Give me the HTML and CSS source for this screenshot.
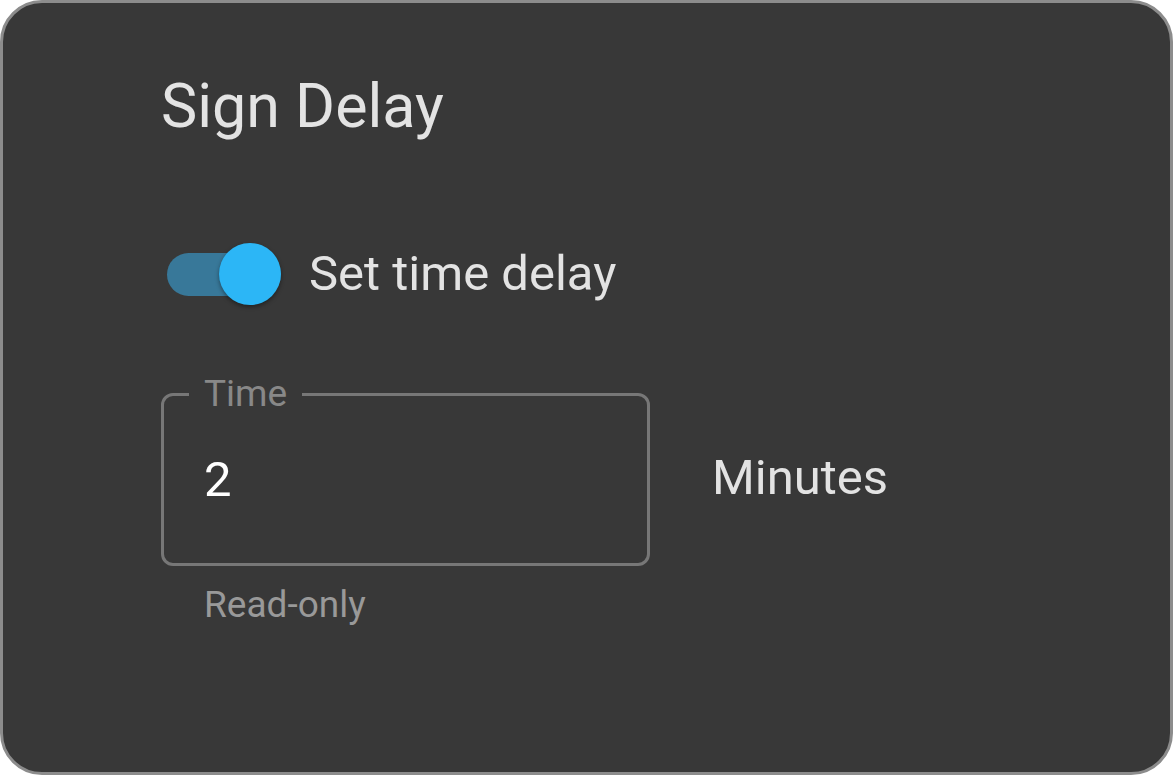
FILE: index.html
```html
<!DOCTYPE html>
<html lang="en">
<head>
<meta charset="utf-8">
<title>Sign Delay</title>
<link rel="stylesheet" href="styles.css">
</head>
<body>
<main class="card">
  <h1 class="title">Sign Delay</h1>
  <label class="switch-row">
    <input class="switch" type="checkbox" role="switch" checked>
    <span>Set time delay</span>
  </label>
  <div class="time-row">
    <fieldset class="field">
      <legend class="field-legend"><label for="time">Time</label></legend>
      <input class="field-input" id="time" type="text" value="2" readonly aria-describedby="hint">
    </fieldset>
    <span class="unit">Minutes</span>
  </div>
  <p class="hint" id="hint">Read-only</p>
</main>
</body>
</html>
```

FILE: styles.css
```css
* {
  box-sizing: border-box;
}

body {
  margin: 0;
  background: #fff;
  font-family: Roboto, sans-serif;
  color: #e3e3e3;
}

.card {
  min-height: 100vh;
  padding: 67px 158px;
  background: #383838;
  border: 3px solid #8c8c8c;
  border-radius: 42px;
}

.title {
  margin: 0;
  font-size: 61px;
  line-height: 72px;
  font-weight: 400;
}

.switch-row {
  display: flex;
  align-items: center;
  gap: 28px;
  width: fit-content;
  margin-top: 100px;
  padding-left: 6px;
  font-size: 49px;
  line-height: 64px;
}

.switch {
  appearance: none;
  display: flex;
  align-items: center;
  justify-content: flex-end;
  width: 114px;
  height: 43px;
  margin: 0;
  border-radius: 22px;
  background: #387899;
}

.switch::before {
  content: "";
  width: 62px;
  height: 62px;
  flex: none;
  border-radius: 50%;
  background: #2cb6f6;
  box-shadow: 0 2px 4px rgba(0, 0, 0, 0.4);
}

.time-row {
  display: flex;
  align-items: center;
  gap: 62px;
  margin-top: 69px;
}

.field {
  flex: 0 1 489px;
  min-width: 0;
  height: 191px;
  margin: 0;
  padding: 0 40px 0 25px;
  border: 3px solid #777;
  border-radius: 12px;
}

.field-legend {
  padding: 0 15px;
  font-size: 37px;
  line-height: 38px;
  color: #888;
}

.field-input {
  display: block;
  width: 100%;
  height: 132px;
  padding: 0 0 0 15px;
  border: 0;
  outline: 0;
  background: transparent;
  color: #fff;
  font: inherit;
  font-size: 49px;
}

.unit {
  padding-top: 15px;
  font-size: 49px;
  line-height: 62px;
}

.hint {
  margin: 17px 0 0 43px;
  font-size: 37px;
  line-height: 44px;
  color: #999;
}
```
